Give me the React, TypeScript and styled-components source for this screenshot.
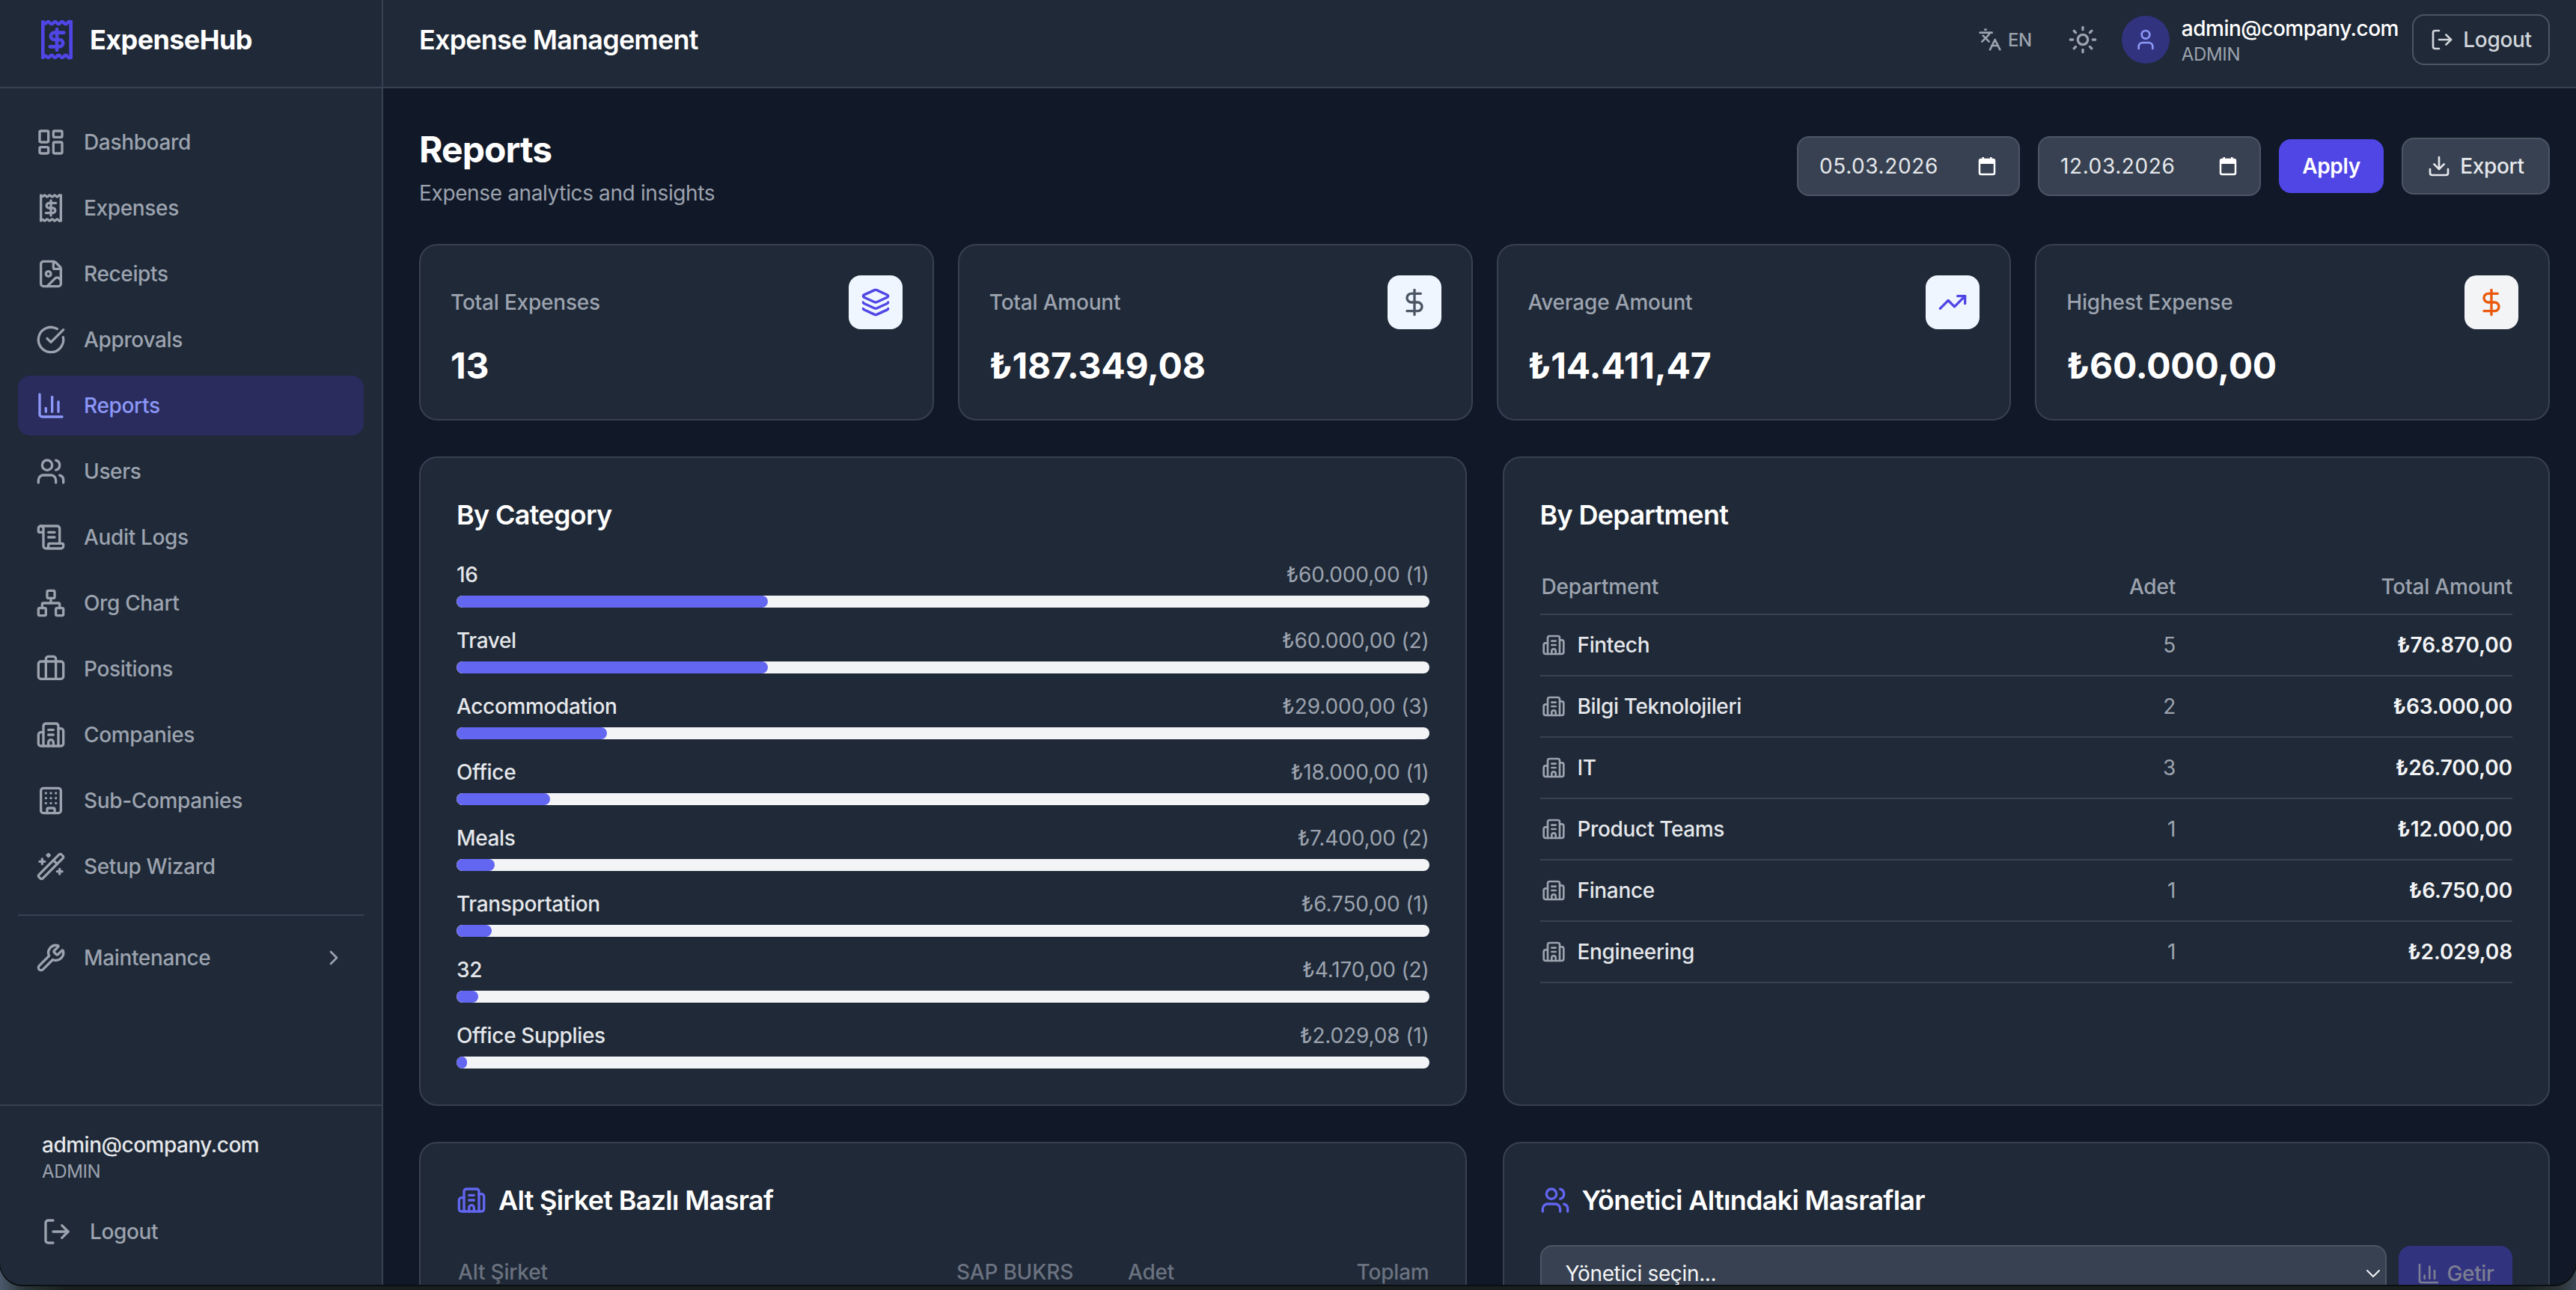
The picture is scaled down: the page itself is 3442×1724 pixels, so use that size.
import React from "react";
import styled, { createGlobalStyle } from "styled-components";
import {
  LayoutDashboard, FileImage, CircleCheckBig, ChartColumn, Users, ScrollText, Network,
  Briefcase, Building2, Building, WandSparkles, Wrench, ChevronRight, ChevronDown, LogOut,
  Languages, Sun, User, Layers, DollarSign, TrendingUp, Download,
} from "lucide-react";

const Global = createGlobalStyle`
  html, body { margin: 0; padding: 0; width: 3442px; height: 1724px; overflow: hidden; background: #1a2120; }
  * { box-sizing: border-box; }
  body { font-family: Inter, "Noto Sans", sans-serif; letter-spacing: -0.35px; -webkit-font-smoothing: antialiased; }
  button { letter-spacing: inherit; }
`;

const Desktop = styled.div`
  width: 3442px;
  height: 1724px;
  background: linear-gradient(90deg, #4a596c 0, #2a3336 34px, #181f1e 90px, #181f1e 3360px, #2c3438 3420px, #3d4854 100%);
`;

const Window = styled.div`
  width: 3442px;
  height: 1717px;
  display: flex;
  overflow: hidden;
  background: #111827;
  border-radius: 0 0 30px 30px;
  box-shadow: 0 1px 0 1px #0b0f10;
`;

const Sidebar = styled.aside`
  width: 512px;
  flex: none;
  display: flex;
  flex-direction: column;
  background: #1f2937;
  border-right: 2px solid #374151;
`;

const Brand = styled.div`
  height: 118px;
  flex: none;
  display: flex;
  align-items: center;
  gap: 16px;
  padding: 0 0 10px 48px;
  border-bottom: 2px solid #374151;
  color: #4f46e5;
`;

const BrandName = styled.span`
  font-size: 36px;
  font-weight: 700;
  letter-spacing: -0.6px;
  color: #ffffff;
`;

const Nav = styled.nav`
  flex: 1;
  display: flex;
  flex-direction: column;
  gap: 8px;
  padding: 32px 24px 0;
`;

const NavItem = styled.a<{ $active?: boolean }>`
  height: 80px;
  flex: none;
  display: flex;
  align-items: center;
  gap: 24px;
  padding: 0 24px;
  border-radius: 16px;
  font-size: 28px;
  font-weight: 500;
  color: ${(p) => (p.$active ? "#8c98f8" : "#9ca3af")};
  background: ${(p) => (p.$active ? "#2a2c5e" : "transparent")};
  svg { flex: none; }
`;

const NavChevron = styled.span`
  margin-left: auto;
  display: flex;
`;

const NavDivider = styled.div`
  height: 2px;
  flex: none;
  margin: 16px 0 8px;
  background: #374151;
`;

const SideFooter = styled.div`
  flex: none;
  height: 241px;
  padding: 32px 0 0 56px;
  border-top: 2px solid #374151;
`;

const SideEmail = styled.div`
  font-size: 28px;
  line-height: 40px;
  font-weight: 500;
  letter-spacing: -0.5px;
  color: #e5e7eb;
`;

const SideRole = styled.div`
  font-size: 24px;
  line-height: 32px;
  color: #9ca3af;
`;

const SideLogout = styled.a`
  height: 80px;
  margin-top: 24px;
  display: flex;
  align-items: center;
  gap: 24px;
  font-size: 28px;
  font-weight: 500;
  color: #9ca3af;
`;

const Column = styled.div`
  flex: 1;
  min-width: 0;
  display: flex;
  flex-direction: column;
`;

const TopBar = styled.header`
  height: 118px;
  flex: none;
  display: flex;
  align-items: center;
  padding: 0 35px 10px 48px;
  background: #1f2937;
  border-bottom: 2px solid #374151;
`;

const TopTitle = styled.div`
  font-size: 36px;
  font-weight: 600;
  letter-spacing: -0.8px;
  color: #ffffff;
  margin-right: auto;
`;

const LangSwitch = styled.div`
  display: flex;
  align-items: center;
  gap: 8px;
  font-size: 24px;
  font-weight: 500;
  color: #9ca3af;
`;

const ThemeToggle = styled.div`
  display: flex;
  margin-left: 48px;
  color: #9ca3af;
`;

const Avatar = styled.div`
  width: 64px;
  height: 64px;
  margin-left: 32px;
  border-radius: 50%;
  display: flex;
  align-items: center;
  justify-content: center;
  background: #32337f;
  color: #8c98f8;
`;

const UserBlock = styled.div`
  margin-left: 16px;
  padding-top: 3px;
  display: flex;
  flex-direction: column;
  gap: 1px;
`;

const UserEmail = styled.div`
  font-size: 28px;
  line-height: 36px;
  font-weight: 500;
  letter-spacing: -0.5px;
  color: #ffffff;
`;

const UserRole = styled.div`
  font-size: 24px;
  line-height: 32px;
  color: #9ca3af;
`;

const LogoutButton = styled.button`
  width: 184px;
  height: 68px;
  margin-left: 18px;
  display: flex;
  align-items: center;
  justify-content: center;
  gap: 12px;
  padding: 0;
  font: 500 28px Inter, sans-serif;
  color: #d1d5db;
  background: transparent;
  border: 2px solid #4b5563;
  border-radius: 16px;
`;

const Main = styled.main`
  flex: 1;
  min-height: 0;
  overflow: hidden;
  padding: 48px 35px 0 48px;
`;

const PageHead = styled.div`
  display: flex;
  justify-content: space-between;
  align-items: flex-start;
  margin-bottom: 48px;
`;

const PageTitle = styled.h1`
  margin: 2px 0 0;
  font-size: 48px;
  line-height: 64px;
  font-weight: 700;
  letter-spacing: -0.95px;
  color: #ffffff;
`;

const PageSub = styled.p`
  margin: 6px 0 0;
  font-size: 28px;
  line-height: 40px;
  letter-spacing: -0.37px;
  color: #9ca3af;
`;

const HeadActions = styled.div`
  display: flex;
  align-items: center;
  gap: 24px;
  margin-top: 16px;
`;

const DateField = styled.div`
  width: 298px;
  height: 80px;
  display: flex;
  align-items: center;
  justify-content: space-between;
  padding: 0 30px 0 28px;
  font-size: 28px;
  letter-spacing: 0.6px;
  color: #e5e7eb;
  background: #374151;
  border: 2px solid #4b5563;
  border-radius: 16px;
`;

const ApplyButton = styled.button`
  width: 140px;
  height: 72px;
  padding: 0;
  font: 600 28px Inter, sans-serif;
  color: #ffffff;
  background: #4f46e5;
  border: 0;
  border-radius: 16px;
`;

const ExportButton = styled.button`
  width: 198px;
  height: 76px;
  display: flex;
  align-items: center;
  justify-content: center;
  gap: 12px;
  padding: 0;
  font: 500 28px Inter, sans-serif;
  color: #e5e7eb;
  background: #374151;
  border: 2px solid #4b5563;
  border-radius: 16px;
`;

const StatGrid = styled.div`
  display: grid;
  grid-template-columns: repeat(4, 1fr);
  gap: 32px;
  margin-bottom: 48px;
`;

const StatCard = styled.div`
  height: 236px;
  padding: 40px;
  background: #1f2937;
  border: 2px solid #374151;
  border-radius: 24px;
`;

const StatTop = styled.div`
  display: flex;
  align-items: center;
  justify-content: space-between;
`;

const StatLabel = styled.span`
  font-size: 28px;
  font-weight: 500;
  letter-spacing: -0.2px;
  color: #9ca3af;
`;

const StatIcon = styled.div<{ $bg: string; $fg: string }>`
  width: 72px;
  height: 72px;
  display: flex;
  align-items: center;
  justify-content: center;
  border-radius: 16px;
  background: ${(p) => p.$bg};
  color: ${(p) => p.$fg};
`;

const StatValue = styled.div`
  margin-top: 18px;
  font-size: 48px;
  line-height: 62px;
  font-weight: 700;
  letter-spacing: -0.2px;
  color: #ffffff;
`;

const TwoCols = styled.div`
  display: grid;
  grid-template-columns: repeat(2, 1fr);
  gap: 48px;
  margin-bottom: 48px;
`;

const Panel = styled.section`
  padding: 48px;
  background: #1f2937;
  border: 2px solid #374151;
  border-radius: 24px;
`;

const PanelTitle = styled.h2`
  margin: 0 0 32px;
  display: flex;
  align-items: center;
  gap: 16px;
  font-size: 36px;
  line-height: 56px;
  font-weight: 600;
  letter-spacing: -0.7px;
  color: #ffffff;
  svg { color: #6366f1; flex: none; }
`;

const BarList = styled.div`
  display: flex;
  flex-direction: column;
  gap: 24px;
`;

const BarHead = styled.div`
  display: flex;
  justify-content: space-between;
  align-items: center;
  height: 40px;
  margin-bottom: 8px;
`;

const BarName = styled.span`
  font-size: 28px;
  font-weight: 500;
  color: #e5e7eb;
`;

const BarAmount = styled.span`
  font-size: 28px;
  letter-spacing: -0.15px;
  color: #9ca3af;
`;

const BarTrack = styled.div`
  height: 16px;
  border-radius: 8px;
  background: #f3f4f6;
  overflow: hidden;
`;

const BarFill = styled.div`
  height: 100%;
  border-radius: 8px;
  background: #6366f1;
`;

const TableHead = styled.div`
  height: 74px;
  display: grid;
  grid-template-columns: 1fr 200px 450px;
  align-items: center;
  padding-left: 2px;
  font-size: 28px;
  font-weight: 500;
  letter-spacing: -0.2px;
  color: #9ca3af;
  border-bottom: 2px solid #374151;
`;

const TableRow = styled.div`
  height: 82px;
  display: grid;
  grid-template-columns: 1fr 200px 450px;
  align-items: center;
  padding-left: 2px;
  font-size: 28px;
  border-bottom: 2px solid #374151;
`;

const DeptCell = styled.div`
  display: flex;
  align-items: center;
  gap: 16px;
  font-weight: 500;
  color: #e5e7eb;
  svg { color: #9ca3af; }
`;

const RightCell = styled.div`
  text-align: right;
`;

const CountCell = styled(RightCell)`
  color: #9ca3af;
`;

const AmountCell = styled(RightCell)`
  font-weight: 600;
  letter-spacing: -0.1px;
  color: #f3f4f6;
`;

const SubHead = styled.div`
  display: grid;
  grid-template-columns: 666px 229px 1fr auto;
  height: 72px;
  align-items: center;
  padding-left: 2px;
  font-size: 28px;
  font-weight: 500;
  letter-spacing: -0.2px;
  color: #6b7280;
`;

const PickerRow = styled.div`
  display: flex;
  gap: 16px;
`;

const ManagerSelect = styled.div`
  flex: 1;
  height: 76px;
  display: flex;
  align-items: center;
  justify-content: space-between;
  padding: 0 0 0 32px;
  font-size: 28px;
  color: #f3f4f6;
  background: #374151;
  border: 2px solid #4b5563;
  border-radius: 16px;
`;

const FetchButton = styled.button`
  width: 152px;
  height: 74px;
  margin-top: 1px;
  display: flex;
  align-items: center;
  justify-content: center;
  gap: 8px;
  padding: 0;
  font: 500 28px Inter, sans-serif;
  color: #7c7e92;
  background: #32337f;
  border: 0;
  border-radius: 16px;
`;

const ReceiptDollar = ({ size }: { size: number }) => (
  <svg width={size} height={size} viewBox="0 0 24 24" fill="none" stroke="currentColor" strokeWidth="2" strokeLinecap="round" strokeLinejoin="round">
    <path d="M4 22V2M20 2v20" strokeLinecap="square" />
    <path d="M4 2c.7.9 1.3.9 2 .4.7-.9 1.3-.9 2 0 .7.9 1.3.9 2 0 .7-.9 1.3-.9 2 0 .7.9 1.3.9 2 0 .7-.9 1.3-.9 2 0 .7.9 1.3.9 2 0 .7-.9 1.3-.9 2-.4" />
    <path d="M4 22c.7-.9 1.3-.9 2-.4.7.9 1.3.9 2 0 .7-.9 1.3-.9 2 0 .7.9 1.3.9 2 0 .7-.9 1.3-.9 2 0 .7.9 1.3.9 2 0 .7-.9 1.3-.9 2 0 .7.9 1.3.9 2 .4" />
    <path d="M16 8h-5.5a2 2 0 0 0 0 4h3a2 2 0 0 1 0 4H8" />
    <path d="M12 6v12" />
  </svg>
);

const CalendarGlyph = () => (
  <svg width="24" height="26" viewBox="0 0 24 26" fill="none">
    <rect x="2" y="4" width="20" height="20" rx="2" stroke="#ffffff" strokeWidth="2.5" />
    <rect x="2" y="4" width="20" height="6" fill="#ffffff" />
    <rect x="5.5" y="1" width="2.5" height="4" fill="#ffffff" />
    <rect x="16" y="1" width="2.5" height="4" fill="#ffffff" />
  </svg>
);

const navItems: { label: string; icon: React.ReactNode; active?: boolean }[] = [
  { label: "Dashboard", icon: <LayoutDashboard size={40} /> },
  { label: "Expenses", icon: <ReceiptDollar size={40} /> },
  { label: "Receipts", icon: <FileImage size={40} /> },
  { label: "Approvals", icon: <CircleCheckBig size={40} /> },
  { label: "Reports", icon: <ChartColumn size={40} />, active: true },
  { label: "Users", icon: <Users size={40} /> },
  { label: "Audit Logs", icon: <ScrollText size={40} /> },
  { label: "Org Chart", icon: <Network size={40} /> },
  { label: "Positions", icon: <Briefcase size={40} /> },
  { label: "Companies", icon: <Building2 size={40} /> },
  { label: "Sub-Companies", icon: <Building size={40} /> },
  { label: "Setup Wizard", icon: <WandSparkles size={40} /> },
];

const stats = [
  { label: "Total Expenses", value: "13", icon: <Layers size={40} />, bg: "#eff6ff", fg: "#4f46e5" },
  { label: "Total Amount", value: "₺187.349,08", icon: <DollarSign size={40} />, bg: "#eff6ff", fg: "#4b5563" },
  { label: "Average Amount", value: "₺14.411,47", icon: <TrendingUp size={40} />, bg: "#eff6ff", fg: "#4f46e5" },
  { label: "Highest Expense", value: "₺60.000,00", icon: <DollarSign size={40} />, bg: "#f3f4f6", fg: "#ea580c" },
];

const TOTAL = 187349.08;
const categories: [string, number, string][] = [
  ["16", 60000, "₺60.000,00 (1)"],
  ["Travel", 60000, "₺60.000,00 (2)"],
  ["Accommodation", 29000, "₺29.000,00 (3)"],
  ["Office", 18000, "₺18.000,00 (1)"],
  ["Meals", 7400, "₺7.400,00 (2)"],
  ["Transportation", 6750, "₺6.750,00 (1)"],
  ["32", 4170, "₺4.170,00 (2)"],
  ["Office Supplies", 2029.08, "₺2.029,08 (1)"],
];

const departments: [string, string, string][] = [
  ["Fintech", "5", "₺76.870,00"],
  ["Bilgi Teknolojileri", "2", "₺63.000,00"],
  ["IT", "3", "₺26.700,00"],
  ["Product Teams", "1", "₺12.000,00"],
  ["Finance", "1", "₺6.750,00"],
  ["Engineering", "1", "₺2.029,08"],
];

export default function App() {
  return (
    <Desktop>
      <Global />
      <Window>
        <Sidebar>
          <Brand>
            <ReceiptDollar size={56} />
            <BrandName>ExpenseHub</BrandName>
          </Brand>
          <Nav>
            {navItems.map((n) => (
              <NavItem key={n.label} $active={n.active}>
                {n.icon}
                {n.label}
              </NavItem>
            ))}
            <NavDivider />
            <NavItem>
              <Wrench size={40} />
              Maintenance
              <NavChevron>
                <ChevronRight size={32} />
              </NavChevron>
            </NavItem>
          </Nav>
          <SideFooter>
            <SideEmail>admin@company.com</SideEmail>
            <SideRole>ADMIN</SideRole>
            <SideLogout>
              <LogOut size={40} />
              Logout
            </SideLogout>
          </SideFooter>
        </Sidebar>
        <Column>
          <TopBar>
            <TopTitle>Expense Management</TopTitle>
            <LangSwitch>
              <Languages size={32} />
              EN
            </LangSwitch>
            <ThemeToggle>
              <Sun size={40} />
            </ThemeToggle>
            <Avatar>
              <User size={32} />
            </Avatar>
            <UserBlock>
              <UserEmail>admin@company.com</UserEmail>
              <UserRole>ADMIN</UserRole>
            </UserBlock>
            <LogoutButton>
              <LogOut size={32} />
              Logout
            </LogoutButton>
          </TopBar>
          <Main>
            <PageHead>
              <div>
                <PageTitle>Reports</PageTitle>
                <PageSub>Expense analytics and insights</PageSub>
              </div>
              <HeadActions>
                <DateField>
                  05.03.2026
                  <CalendarGlyph />
                </DateField>
                <DateField>
                  12.03.2026
                  <CalendarGlyph />
                </DateField>
                <ApplyButton>Apply</ApplyButton>
                <ExportButton>
                  <Download size={32} />
                  Export
                </ExportButton>
              </HeadActions>
            </PageHead>
            <StatGrid>
              {stats.map((s) => (
                <StatCard key={s.label}>
                  <StatTop>
                    <StatLabel>{s.label}</StatLabel>
                    <StatIcon $bg={s.bg} $fg={s.fg}>
                      {s.icon}
                    </StatIcon>
                  </StatTop>
                  <StatValue>{s.value}</StatValue>
                </StatCard>
              ))}
            </StatGrid>
            <TwoCols>
              <Panel>
                <PanelTitle>By Category</PanelTitle>
                <BarList>
                  {categories.map(([name, amount, text]) => (
                    <div key={name}>
                      <BarHead>
                        <BarName>{name}</BarName>
                        <BarAmount>{text}</BarAmount>
                      </BarHead>
                      <BarTrack>
                        <BarFill style={{ width: `${(amount / TOTAL) * 100}%` }} />
                      </BarTrack>
                    </div>
                  ))}
                </BarList>
              </Panel>
              <Panel>
                <PanelTitle>By Department</PanelTitle>
                <TableHead>
                  <span>Department</span>
                  <RightCell>Adet</RightCell>
                  <RightCell>Total Amount</RightCell>
                </TableHead>
                {departments.map(([name, count, amount]) => (
                  <TableRow key={name}>
                    <DeptCell>
                      <Building2 size={32} />
                      {name}
                    </DeptCell>
                    <CountCell>{count}</CountCell>
                    <AmountCell>{amount}</AmountCell>
                  </TableRow>
                ))}
              </Panel>
            </TwoCols>
            <TwoCols>
              <Panel>
                <PanelTitle>
                  <Building2 size={40} />
                  Alt Şirket Bazlı Masraf
                </PanelTitle>
                <SubHead>
                  <span>Alt Şirket</span>
                  <span>SAP BUKRS</span>
                  <span>Adet</span>
                  <span>Toplam</span>
                </SubHead>
              </Panel>
              <Panel>
                <PanelTitle>
                  <Users size={40} />
                  Yönetici Altındaki Masraflar
                </PanelTitle>
                <PickerRow>
                  <ManagerSelect>
                    Yönetici seçin...
                    <ChevronDown size={32} strokeWidth={1.5} />
                  </ManagerSelect>
                  <FetchButton>
                    <ChartColumn size={32} />
                    Getir
                  </FetchButton>
                </PickerRow>
              </Panel>
            </TwoCols>
          </Main>
        </Column>
      </Window>
    </Desktop>
  );
}
